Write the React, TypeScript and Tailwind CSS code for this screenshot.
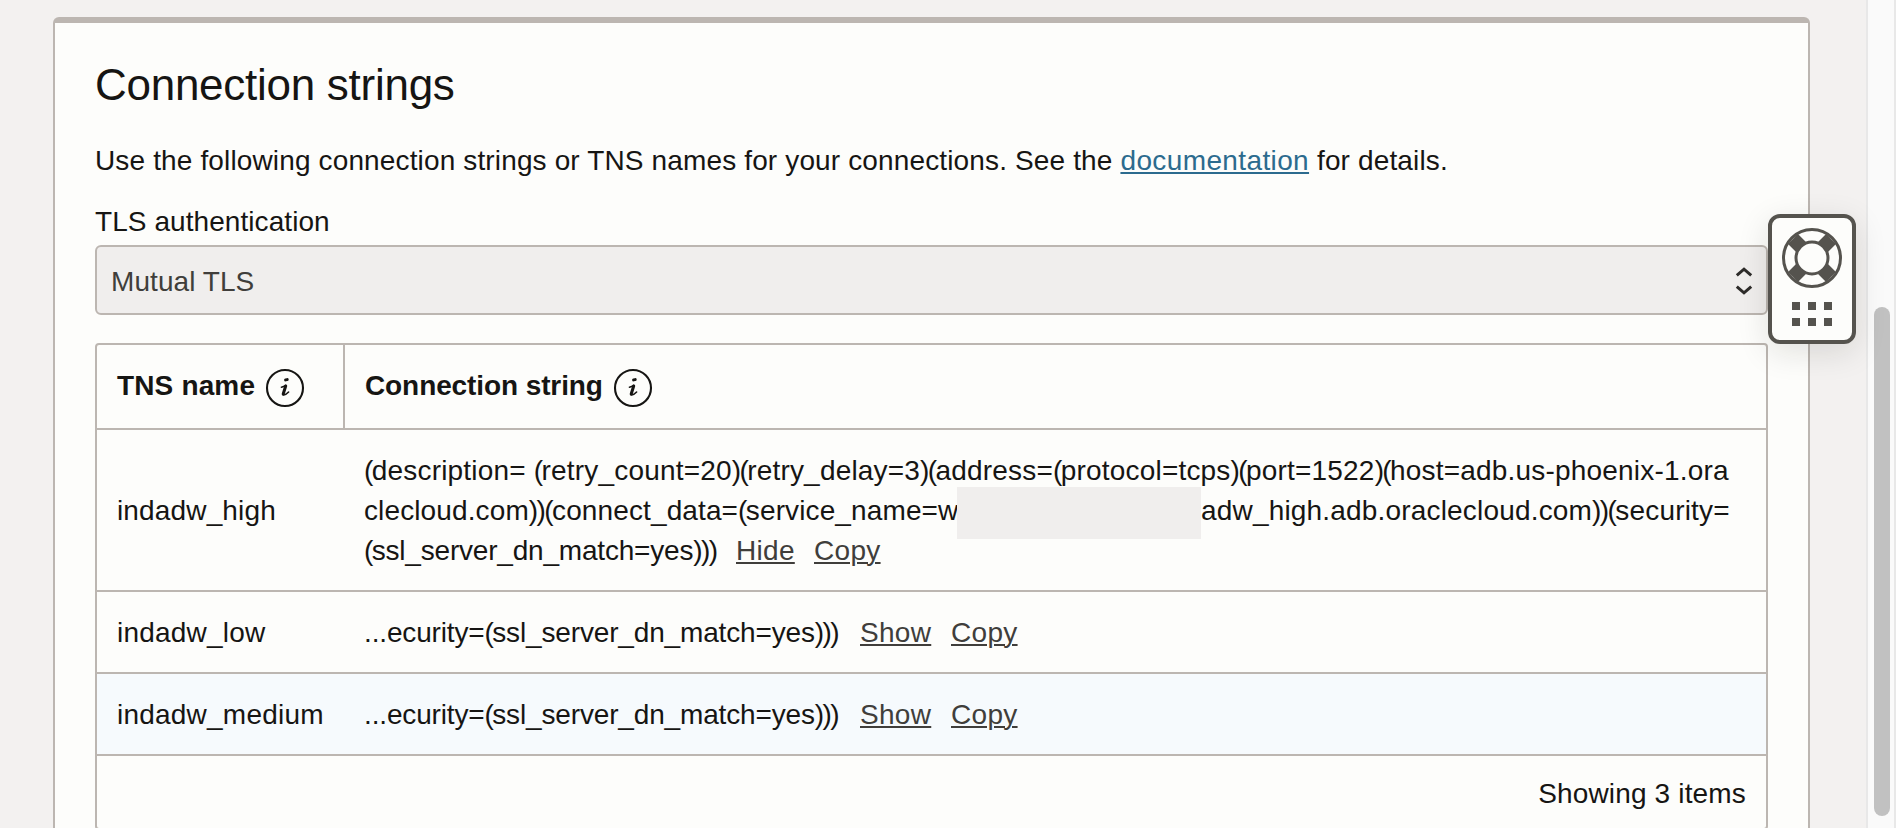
import React from "react";

function InfoIcon() {
  return (
    <svg width="40" height="40" viewBox="0 0 40 40" fill="none" stroke="#161513" strokeLinecap="round" strokeLinejoin="round">
      <circle cx="20" cy="20" r="18" strokeWidth="2.1" />
      <path d="M20.6 11.9 L22.2 11.6" strokeWidth="3" />
      <path d="M16.4 19.2 Q18.5 18.8 20.8 17.4" strokeWidth="1.5" />
      <path d="M20.7 18 L18.2 26" strokeWidth="3" />
      <path d="M18 26.8 Q20.4 27.4 23.6 24" strokeWidth="1.6" />
    </svg>
  );
}

function Action({ children, className }: { children: string; className: string }) {
  return (
    <a className={`tracking-[0.3px] text-[#403e3b] underline decoration-2 underline-offset-[2px] ${className}`}>{children}</a>
  );
}

// Sets parentheses tighter than the text around them.
function Descriptor({ text, className }: { text: string; className: string }) {
  return (
    <span className={className}>
      {text.split(/([()]+)/).map((part, i) =>
        i % 2 === 1 ? <span key={i} className="tracking-[-1.6px]">{part}</span> : part
      )}
    </span>
  );
}

function Row({ name, highlighted }: { name: string; highlighted?: boolean }) {
  return (
    <div className={`flex h-[82px] border-b-2 border-[#bcb6b1] pt-[21px] ${highlighted ? "bg-[#f6fafd]" : ""}`}>
      <div className="w-[247px] pl-5 tracking-[0.22px]">{name}</div>
      <div className="flex pl-5">
        <Descriptor className="w-[496px] tracking-[-0.15px]" text="...ecurity=(ssl_server_dn_match=yes)))" />
        <Action className="w-[91px]">Show</Action>
        <Action className="">Copy</Action>
      </div>
    </div>
  );
}

function HelpWidget() {
  return (
    <div className="absolute left-[1768px] top-[214px] flex h-[130px] w-[88px] flex-col items-center rounded-xl border-4 border-[#55534e] bg-[#fdfdfb] pt-[10px] shadow-[0_8px_32px_rgba(22,21,19,0.12)]">
      <svg width="60" height="60" viewBox="0 0 60 60" fill="none" stroke="#55534e">
        <circle cx="30" cy="30" r="28.5" strokeWidth="3" />
        <circle cx="30" cy="30" r="16" strokeWidth="3" />
        <path d="M11 11 L19 19 M49 11 L41 19 M11 49 L19 41 M49 49 L41 41" strokeWidth="14" />
      </svg>
      <div className="mt-[14px] grid grid-cols-3 gap-2">
        <i className="size-2 bg-[#55534e]" />
        <i className="size-2 bg-[#55534e]" />
        <i className="size-2 bg-[#55534e]" />
        <i className="size-2 bg-[#55534e]" />
        <i className="size-2 bg-[#55534e]" />
        <i className="size-2 bg-[#55534e]" />
      </div>
    </div>
  );
}

export default function App() {
  return (
    <div className="relative flex h-[828px] w-[1896px] overflow-hidden whitespace-nowrap bg-[#f3f1f0] font-['Liberation_Sans',Arial,sans-serif] text-[28px] leading-10 text-[#161513]">
      <div className="w-[1866px] pl-[53px] pt-[17px]">
        <section className="h-[900px] w-[1757px] rounded-t-md border-x-2 border-t-[6px] border-[#bcb6b1] bg-[#fdfdfb] px-10 pt-[34px]">
          <h1 className="h-[84px] text-[44px] leading-[56px] tracking-[-0.27px]">Connection strings</h1>
          <p className="h-[61px] tracking-[0.14px]">
            Use the following connection strings or TNS names for your connections. See the{" "}
            <a className="tracking-[0.38px] text-[#2c6b8e] underline decoration-2 underline-offset-[2px]">documentation</a> for details.
          </p>
          <div className="h-[43px] tracking-[0.07px]">TLS authentication</div>
          <div className="flex h-[70px] w-[1673px] justify-between rounded-md border-2 border-[#bcb6b1] bg-[#f0eeed] pl-[14px] pr-[13px] pt-[15px] text-[#403e3b]">
            <span className="tracking-[0.07px]">Mutual TLS</span>
            <svg className="mt-[3px]" width="18" height="32" viewBox="0 0 18 32" fill="none" stroke="#2e2c2a" strokeWidth="3">
              <path d="M1.8 10.4 L9 4.2 L16.2 10.4 M1.8 21.6 L9 27.8 L16.2 21.6" />
            </svg>
          </div>
          <div className="mt-7 h-[487px] w-[1673px] rounded border-2 border-[#bcb6b1]">
            <div className="flex h-[85px] border-b-2 border-[#bcb6b1] font-bold">
              <div className="flex w-[248px] border-r-2 border-[#bcb6b1] pl-5 pt-[21px]">
                <span className="w-[148px] tracking-[0.15px]">TNS name</span>
                <span className="mt-0.5"><InfoIcon /></span>
              </div>
              <div className="flex pl-5 pt-[21px]">
                <span className="w-[248px] tracking-[-0.1px]">Connection string</span>
                <span className="mt-0.5"><InfoIcon /></span>
              </div>
            </div>
            <div className="flex h-[162px] border-b-2 border-[#bcb6b1]">
              <div className="w-[247px] pl-5 pt-[61px] tracking-[0.15px]">indadw_high</div>
              <div className="pl-5 pt-[21px]">
                <Descriptor
                  className="block tracking-[0.19px]"
                  text="(description= (retry_count=20)(retry_delay=3)(address=(protocol=tcps)(port=1522)(host=adb.us-phoenix-1.ora"
                />
                <div className="flex h-10">
                  <Descriptor className="w-[593px] tracking-[0.12px]" text="clecloud.com))(connect_data=(service_name=w" />
                  <span className="-mt-1 h-[52px] w-[244px] shrink-0 bg-[#f0eeed]" />
                  <Descriptor className="tracking-[0.18px]" text="adw_high.adb.oraclecloud.com))(security=" />
                </div>
                <div className="flex">
                  <Descriptor className="w-[372px] tracking-[-0.2px]" text="(ssl_server_dn_match=yes)))" />
                  <Action className="w-[78px]">Hide</Action>
                  <Action className="">Copy</Action>
                </div>
              </div>
            </div>
            <Row name="indadw_low" />
            <Row name="indadw_medium" highlighted />
            <div className="pr-5 pt-[18px] text-right tracking-[0.16px]">Showing 3 items</div>
          </div>
        </section>
      </div>
      <div className="w-[30px] border-x-2 border-[#e8e8e8] bg-[#fafafa] pl-[6px] pt-[307px]">
        <div className="h-[509px] w-4 rounded-full bg-[#c1c1c1]" />
      </div>
      <HelpWidget />
    </div>
  );
}
